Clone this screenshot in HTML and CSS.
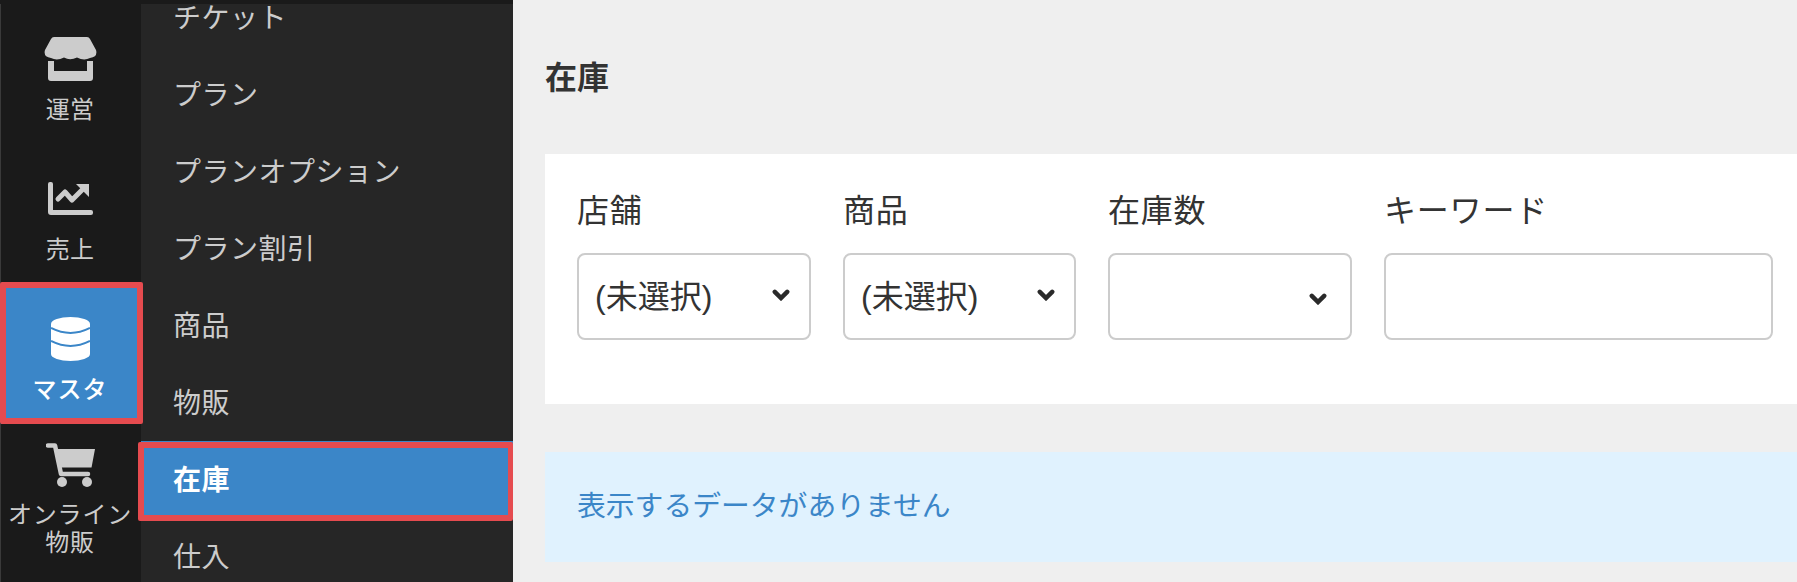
FILE: index.html

```html
<!DOCTYPE html>
<html lang="ja">
<head>
  <meta charset="UTF-8">
  <meta name="viewport" content="width=device-width, initial-scale=1.0">
  <title>在庫</title>
  <link rel="stylesheet" href="styles.css">
</head>
<body>
  <div class="sidebar">
    <div class="top-strip"></div>
    <div class="sidebar-cols">
      <nav class="rail">
        <a class="rail-item">
          <svg class="rail-icon" width="53" height="44" viewBox="0 0 53 44">
            <path d="M10 0H43Q45 0 46 2L52 13Q54 20 46 21Q40 24 33 20.5Q26 24 20 20.5Q13 24 7 21Q-1 20 1 13L7 2Q8 0 10 0Z"/>
            <path d="M4 24H10V34H43V24H49V41A3 3 0 0 1 46 44H7A3 3 0 0 1 4 41Z"/>
          </svg>
          <span class="rail-label">運営</span>
        </a>
        <a class="rail-item">
          <svg class="rail-icon" width="45" height="44" viewBox="0 -5 45 44">
            <path d="M0 2Q0 0 2 0H3Q5 0 5 2V28H43Q45 28 45 30V31Q45 33 43 33H3Q0 33 0 30Z"/>
            <path class="chart-line" d="M10 17L17 10L24 18L35 7"/>
            <path d="M28 2H41V15Z"/>
          </svg>
          <span class="rail-label">売上</span>
        </a>
        <a class="rail-item is-active">
          <svg class="rail-icon" width="39" height="44" viewBox="0 0 39 44">
            <path d="M0 7A19.5 7 0 0 1 39 7V37A19.5 7 0 0 1 0 37Z"/>
            <path class="db-line" d="M0 11Q19.5 21 39 11"/>
            <path class="db-line" d="M0 24Q19.5 34 39 24"/>
          </svg>
          <span class="rail-label">マスタ</span>
        </a>
        <a class="rail-item rail-item-wide">
          <svg class="rail-icon" width="49" height="44" viewBox="0 0 49 44">
            <path class="cart-line" d="M2 2.5H9L15 31H42"/>
            <path d="M11 6H49L45.5 24.5H14.5Z"/>
            <circle cx="16" cy="39" r="5"/>
            <circle cx="41" cy="39" r="5"/>
          </svg>
          <span class="rail-label rail-label-long">オンライン<br>物販</span>
        </a>
      </nav>
      <ul class="submenu">
        <li class="submenu-item">チケット</li>
        <li class="submenu-item">プラン</li>
        <li class="submenu-item">プランオプション</li>
        <li class="submenu-item">プラン割引</li>
        <li class="submenu-item">商品</li>
        <li class="submenu-item">物販</li>
        <li class="submenu-item is-active">在庫</li>
        <li class="submenu-item">仕入</li>
      </ul>
    </div>
  </div>

  <main class="content">
    <h1 class="page-title">在庫</h1>
    <form class="filter-card">
      <div class="field">
        <label class="field-label">店舗</label>
        <div class="select-wrap">
          <select class="control"><option>(未選択)</option></select>
          <svg class="chevron" width="18" height="12" viewBox="0 0 18 12"><path d="M2.8 2.8L9 9L15.2 2.8"/></svg>
        </div>
      </div>
      <div class="field">
        <label class="field-label">商品</label>
        <div class="select-wrap">
          <select class="control"><option>(未選択)</option></select>
          <svg class="chevron" width="18" height="12" viewBox="0 0 18 12"><path d="M2.8 2.8L9 9L15.2 2.8"/></svg>
        </div>
      </div>
      <div class="field">
        <label class="field-label">在庫数</label>
        <div class="select-wrap">
          <select class="control"><option></option></select>
          <svg class="chevron chevron-low" width="18" height="12" viewBox="0 0 18 12"><path d="M2.8 2.8L9 9L15.2 2.8"/></svg>
        </div>
      </div>
      <div class="field">
        <label class="field-label">キーワード</label>
        <input class="control" type="text">
      </div>
    </form>
    <div class="info-box">表示するデータがありません</div>
  </main>
</body>
</html>
```

FILE: styles.css

```css
* { box-sizing: border-box; }
html, body { height: 100%; overflow: hidden; }
body {
  margin: 0; display: flex; background: #efefef; color: #333;
  font-family: "Liberation Sans", "Noto Sans CJK JP", sans-serif;
}

.sidebar { width: 513px; flex: none; display: flex; flex-direction: column; background: #262626; }
.top-strip { height: 4px; flex: none; background: #1a1a1a; position: relative; z-index: 3; }
.sidebar-cols { display: flex; flex: 1; }

.rail { width: 141px; flex: none; background: #1a1a1a; border-left: 1px solid #3a3a3a; position: relative; z-index: 2; }
.rail-item {
  height: 140px; padding: 33px 2px 0 0; display: flex; flex-direction: column; align-items: center;
  color: #ccc; position: relative;
}
.rail-item-wide { padding-top: 19px; height: 154px; }
.rail-icon { flex: none; fill: #ccc; }
.rail-label { margin-top: 14px; font-size: 24px; line-height: 29px; letter-spacing: .3px; text-align: center; white-space: nowrap; }
.rail-label-long { line-height: 28px; letter-spacing: .8px; }
.chart-line { fill: none; stroke: #ccc; stroke-width: 5; stroke-linecap: round; stroke-linejoin: round; }
.cart-line { fill: none; stroke: #ccc; stroke-width: 4.5; stroke-linecap: round; stroke-linejoin: round; }
.db-line { fill: none; stroke: #3b86c8; stroke-width: 2; }

.rail-item.is-active { background: #3b86c8; color: #fff; }
.rail-item.is-active .rail-icon { fill: #fff; }
.rail-item.is-active .rail-label { font-weight: 500; letter-spacing: 1px; }
.rail-item.is-active::after {
  content: ""; position: absolute; top: -2px; left: -1px; right: -2px; bottom: 0;
  border: 6px solid #e54b4f; border-radius: 2px;
}

.submenu { flex: 1; list-style: none; margin: -25px 0 0; padding: 0; }
.submenu-item { height: 77px; padding-left: 32px; line-height: 80px; font-size: 28px; letter-spacing: .5px; color: #ccc; position: relative; }
.submenu-item.is-active { background: #3b86c8; color: #fff; font-weight: bold; z-index: 3; }
.submenu-item.is-active::after {
  content: ""; position: absolute; top: 1px; left: -3px; right: 0; bottom: -3px;
  border: 6px solid #e54b4f; border-right-width: 5px; border-radius: 2px;
}

.content { flex: 1; min-width: 0; padding: 59px 0 0 32px; }
.page-title { margin: 0 0 57px; font-size: 32px; line-height: 38px; font-weight: bold; color: #333; }

.filter-card {
  height: 250px; padding: 38px 0 0 32px; background: #fff;
  display: grid; grid-template-columns: 234px 233px 244px 389px; column-gap: 32px; align-content: start;
}
.field-label { display: block; margin-bottom: 23px; font-size: 32px; line-height: 38px; letter-spacing: .8px; color: #333; }
.select-wrap { position: relative; }
.control {
  display: block; width: 100%; height: 87px; padding: 0 40px 0 16px;
  background: #fff; border: 2px solid #ccc; border-radius: 8px;
  font: inherit; font-size: 32px; color: #333; appearance: none; outline: none;
}
.chevron { position: absolute; top: 36px; right: 21px; pointer-events: none; }
.chevron-low { top: 40px; right: 25px; }
.chevron path { fill: none; stroke: #2a2a2a; stroke-width: 4.5; stroke-linecap: round; }

.info-box {
  margin-top: 48px; height: 110px; padding-left: 32px; background: #e0f2fe; color: #3b86c8;
  font-size: 28.8px; line-height: 109px;
}
```
